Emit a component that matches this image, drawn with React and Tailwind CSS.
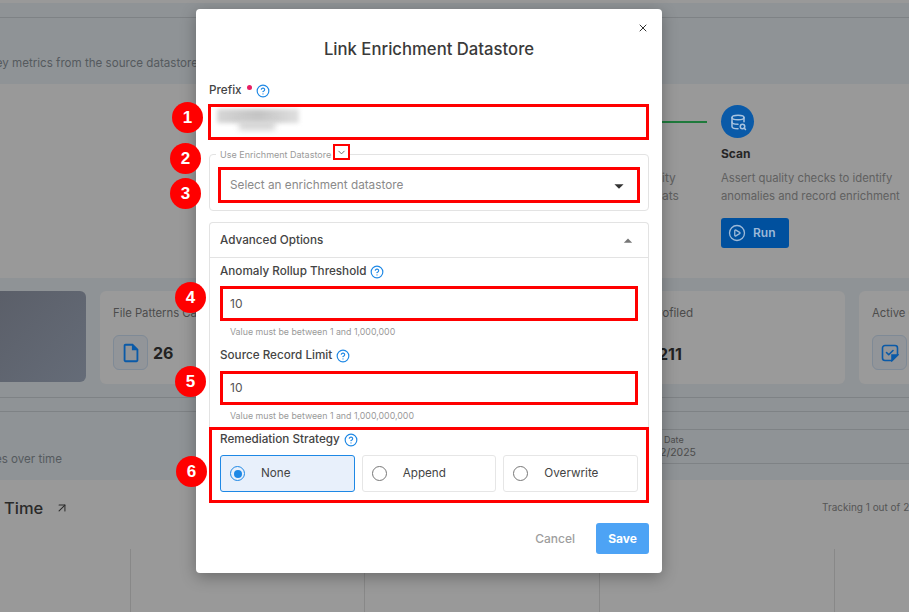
import React from 'react';
import { CircleHelp, ChevronDown, X, CirclePlay, ArrowUpRight } from 'lucide-react';
import { MdArrowDropDown, MdArrowDropUp, MdOutlineInsertDriveFile } from 'react-icons/md';
import { TbDatabaseSearch } from 'react-icons/tb';

const Help = () => <CircleHelp className="w-[14px] h-[14px] text-[#1e88e5]" strokeWidth={2} />;

const Marker = ({ n, className }) => (
  <div className={`absolute w-[31px] h-[31px] rounded-full bg-[#ff0000] text-white font-bold text-[17px] flex items-center justify-center font-['Liberation_Sans',sans-serif] ${className}`}>
    {n}
  </div>
);

const NumberField = ({ label, hint, boxClass, hintClass }) => (
  <div>
    <div className="flex items-center gap-[4px] h-[16px] text-[11.7px] font-medium text-[#444]">
      {label}
      <Help />
    </div>
    <div className={`border-[3px] border-[#ff0000] flex items-center pl-[7px] text-[12px] text-[#555] ${boxClass}`}>10</div>
    <div className={`pl-[10px] text-[8.8px] leading-[12px] text-[#9a9a9a] ${hintClass}`}>{hint}</div>
  </div>
);

const Radio = ({ label, active }) => (
  <div className={`flex-1 h-[37px] rounded-[3px] border flex items-center ${active ? 'bg-[#e8f0fb] border-[#1e88e5]' : 'bg-white border-[#e6e6e6]'}`}>
    <div className={`ml-[9px] w-[15px] h-[15px] rounded-full border-[1.5px] flex items-center justify-center ${active ? 'border-[#1e88e5]' : 'border-[#777]'}`}>
      {active && <div className="w-[8px] h-[8px] rounded-full bg-[#1e88e5]" />}
    </div>
    <span className="ml-[16px] text-[11.7px] text-[#444]">{label}</span>
  </div>
);

const StatCard = ({ label, value, icon, className }) => (
  <div className={`h-[93px] shrink-0 rounded-[6px] bg-[#9a9a9a] pl-[13px] pt-[14px] ${className}`}>
    <div className="w-[90px] overflow-hidden text-[11.3px] leading-[16px] text-[#4c4c4c] whitespace-nowrap">{label}</div>
    <div className="mt-[14px] flex items-center gap-[5px]">
      <div className="w-[35px] h-[35px] shrink-0 rounded-[6px] border border-[#7f8a96] bg-[#929599] flex items-center justify-center">{icon}</div>
      <span className="text-[16px] font-bold text-[#222]">{value}</span>
    </div>
  </div>
);

const NoteCheck = () => (
  <svg width="18" height="18" viewBox="0 0 18 18" fill="none" stroke="#0a5aa8" strokeWidth="1.6">
    <path d="M11 16.5H4a2.5 2.5 0 0 1-2.5-2.5V4A2.5 2.5 0 0 1 4 1.5h10A2.5 2.5 0 0 1 16.5 4v7z" />
    <path d="M11 16.5 16.5 11H11z" fill="#0a5aa8" />
    <path d="m5.5 8.5 2.2 2.2 4.3-4.2" strokeLinecap="round" strokeLinejoin="round" />
  </svg>
);

const Background = () => (
  <div className="w-[909px] h-[612px] overflow-hidden bg-[#999999]">
    <div className="h-[3px]" />
    {/* Page header band */}
    <div className="h-[81px] bg-[#8f9396]">
      <div className="h-[15px] border-b border-[#7e8285]" />
      <div className="mt-[37px] w-[198px] flex justify-end overflow-hidden whitespace-nowrap text-[11.6px] leading-[16px] text-[#555a5e]">
        Collect key metrics from the source datastore
      </div>
    </div>

    {/* Operations steps */}
    <div className="h-[194px] flex">
      <div className="w-[662px] shrink-0" />
      <div className="relative w-[247px]">
        <div className="absolute left-0 top-[37px] w-[45px] h-[2px] bg-[#1f7a3c]" />
        <div className="absolute left-0 top-[85px] text-[12px] leading-[18px] text-[#606060]">ity<br />ats</div>
        <div className="ml-[59px] pt-[21px]">
          <div className="w-[33px] h-[33px] rounded-full bg-[#0a5aa8] flex items-center justify-center">
            <TbDatabaseSearch className="w-[18px] h-[18px] text-[#a9c4e0]" />
          </div>
          <div className="mt-[8px] text-[12px] leading-[16px] font-bold text-[#262626]">Scan</div>
          <div className="mt-[7px] text-[11.3px] leading-[18px] text-[#606060] whitespace-nowrap">
            Assert quality checks to identify<br />anomalies and record enrichment
          </div>
          <div className="mt-[13px] w-[68px] h-[30px] rounded-[3px] bg-[#00509e] flex items-center pl-[7px] gap-[7px] text-[#9db9d8] text-[12px] font-semibold">
            <CirclePlay className="w-[18px] h-[18px]" strokeWidth={1.75} />
            Run
          </div>
        </div>
      </div>
    </div>

    {/* Stats */}
    <div className="h-[202px] bg-[#8f9396]">
      <div className="pt-[13px] flex gap-[14px]">
        <div className="w-[86px] h-[91px] shrink-0 rounded-r-[6px] bg-gradient-to-br from-[#5b5f69] to-[#656c78]" />
        <StatCard
          className="w-[480px]"
          label="File Patterns Catalogued"
          value="26"
          icon={<MdOutlineInsertDriveFile className="w-[22px] h-[22px] text-[#0a5aa8]" />}
        />
        <div className="w-[251px] h-[93px] shrink-0 rounded-[6px] bg-[#9a9a9a] pt-[14px] pl-[64px]">
          <div className="text-[11.7px] leading-[16px] text-[#4c4c4c]">rofiled</div>
          <div className="mt-[22px] text-[16px] leading-[22px] font-bold text-[#222]">211</div>
        </div>
        <StatCard
          className="w-[366px]"
          label="Active Checks"
          value="48"
          icon={<NoteCheck />}
        />
      </div>
      <div className="mt-[13px] h-[15px] border-y border-[#7e8285]" />
      <div className="flex h-[67px]">
        <div className="w-[62px] mt-[39px] flex justify-end overflow-hidden whitespace-nowrap text-[11.6px] leading-[16px] text-[#555a5e]">
          Track changes over time
        </div>
        <div className="ml-[560px] mt-[17px] h-[35px] w-[287px] border-y border-[#7e8285] text-[#4c4c4c]">
          <div className="pl-[42px] text-[9px] leading-[12px] mt-[4px]">Date</div>
          <div className="pl-[38px] text-[10.5px] leading-[14px]">2/2025</div>
        </div>
      </div>
    </div>

    {/* Chart */}
    <div className="h-[132px]">
      <div className="h-[69px] flex items-start justify-between pt-[19px] pl-[4px]">
        <div className="flex items-center gap-[12px] text-[16.5px] leading-[18px] font-medium text-[#2a2a2a]">
          Time
          <ArrowUpRight className="w-[14px] h-[14px]" strokeWidth={1.75} />
        </div>
        <div className="w-[87px] pt-[1px] overflow-hidden whitespace-nowrap text-[10px] leading-[14px] text-[#555]">Tracking 1 out of 20</div>
      </div>
      <div className="flex h-[63px]">
        <div className="w-[131px] shrink-0 border-r border-[#888]" />
        <div className="w-[234px] shrink-0 border-r border-[#888]" />
        <div className="w-[235px] shrink-0 border-r border-[#888]" />
        <div className="w-[235px] shrink-0 border-r border-[#888]" />
      </div>
    </div>
  </div>
);

const Modal = () => (
  <div className="w-[466px] h-[564px] rounded-[4px] bg-white shadow-[0_4px_16px_rgba(0,0,0,0.3)] px-[13px] relative">
    <X className="absolute right-[13px] top-[13px] w-[12px] h-[12px] text-[#333]" strokeWidth={2} />
    <h2 className="pt-[29px] h-[72px] text-center text-[16.7px] leading-[22px] font-medium text-[#3a3a3a]">Link Enrichment Datastore</h2>

    {/* Prefix */}
    <div className="flex items-center gap-[4px] h-[16px] mt-[2px] text-[11.7px] font-medium text-[#444]">
      <span>Prefix</span>
      <span className="ml-[1px] w-[5px] h-[5px] rounded-full bg-[#e91e63] -mt-[7px]" />
      <Help />
    </div>
    <div className="mt-[5px] -ml-[1px] h-[36px] border-[3px] border-[#ff0000] pl-[6px] pt-[2px] overflow-hidden">
      <div className="w-[82px] h-[14px] bg-gradient-to-r from-[#d6d6d6] via-[#c4c4c4] to-[#e0e0e0] blur-[2px]" />
      <div className="ml-[22px] -mt-[2px] w-[36px] h-[9px] bg-[#d2d2d2] blur-[3px]" />
    </div>

    {/* Enrichment datastore */}
    <div className="mt-[14px] relative h-[57px] rounded-[4px] border border-[#e3e3e3] px-[8px] pt-[12px]">
      <div className="absolute left-[6px] -top-[6px] bg-white px-[4px] text-[9px] leading-[12px] text-[#9a9a9a]">Use Enrichment Datastore</div>
      <div className="h-[36px] border-[3px] border-[#ff0000] flex items-center justify-between pl-[9px] pr-[7px] pt-[2px] text-[11.75px] text-[#8a8a8a]">
        Select an enrichment datastore
        <MdArrowDropDown className="w-[22px] h-[22px] text-[#333]" />
      </div>
    </div>

    {/* Advanced options */}
    <div className="mt-[11px] h-[206px] rounded-t-[4px] border-x border-t border-[#e3e3e3]">
      <div className="h-[35px] border-b border-[#e3e3e3] flex items-center justify-between pl-[10px] pr-[10px] pt-[2px] text-[11.7px] font-medium text-[#444]">
        Advanced Options
        <MdArrowDropUp className="w-[20px] h-[20px] text-[#777]" />
      </div>
      <div className="pl-[10px] pr-[10px] pt-[6px] flex flex-col gap-[10px]">
        <NumberField
          label="Anomaly Rollup Threshold"
          hint="Value must be between 1 and 1,000,000"
          boxClass="h-[35px] mt-[6px]"
          hintClass="mt-[5px]"
        />
        <NumberField
          label="Source Record Limit"
          hint="Value must be between 1 and 1,000,000,000"
          boxClass="h-[34px] mt-[7px]"
          hintClass="mt-[5px]"
        />
      </div>
    </div>

    {/* Remediation strategy */}
    <div className="h-[76px] border-[3px] border-[#ff0000] -mt-[1px] px-[8px] pt-[2px]">
      <div className="flex items-center gap-[4px] h-[16px] text-[11.7px] font-medium text-[#444]">
        Remediation Strategy
        <Help />
      </div>
      <div className="mt-[7px] flex gap-[7px]">
        <Radio label="None" active />
        <Radio label="Append" />
        <Radio label="Overwrite" />
      </div>
    </div>

    {/* Footer */}
    <div className="mt-[20px] flex items-center justify-end gap-[21px]">
      <span className="text-[12px] font-medium text-[#9e9e9e]">Cancel</span>
      <div className="w-[53px] h-[31px] rounded-[3px] bg-[#4da3f5] flex items-center justify-center text-white text-[12px] font-bold">Save</div>
    </div>
  </div>
);

export default function App() {
  return (
    <div className="relative w-[909px] h-[612px] overflow-hidden font-['Inter',sans-serif]">
      <Background />
      <div className="absolute left-[196px] top-[9px]">
        <Modal />
      </div>

      {/* Annotation overlays */}
      <div className="absolute left-[333px] top-[144px] w-[17px] h-[16px] border-[2px] border-[#ff0000] bg-white flex items-center justify-center">
        <ChevronDown className="w-[11px] h-[11px] text-[#666]" />
      </div>
      <Marker n="1" className="left-[172px] top-[102px]" />
      <Marker n="2" className="left-[170px] top-[143px]" />
      <Marker n="3" className="left-[170px] top-[178px]" />
      <Marker n="4" className="left-[175px] top-[282px]" />
      <Marker n="5" className="left-[175px] top-[366px]" />
      <Marker n="6" className="left-[176px] top-[456px]" />
    </div>
  );
}
